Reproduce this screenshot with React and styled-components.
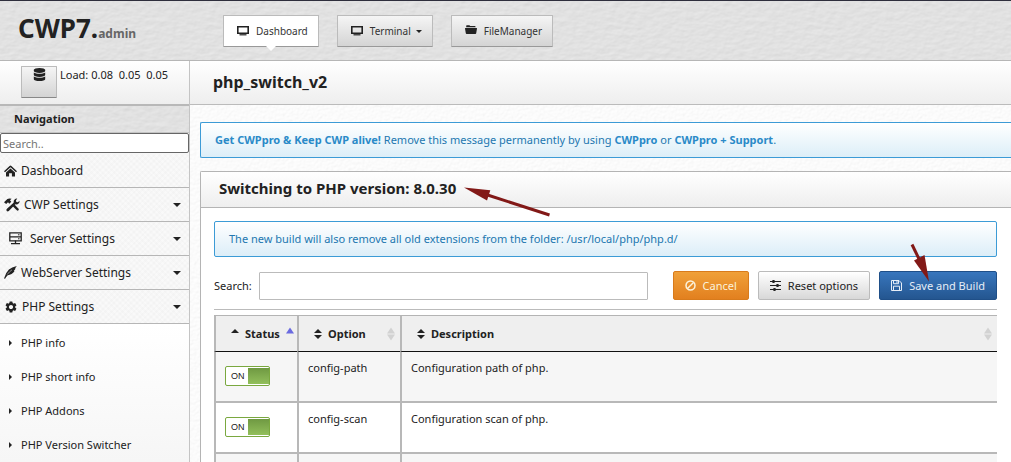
import React from 'react';
import styled, { createGlobalStyle } from 'styled-components';
import { FaDatabase } from 'react-icons/fa';
import { MdSettings } from 'react-icons/md';

// embossed paper grain, a higher elevation gives a lighter surface
const paper = (elevation, depth, frequency) =>
  `url("data:image/svg+xml,${encodeURIComponent(
    `<svg xmlns="http://www.w3.org/2000/svg" width="200" height="200"><filter id="f" x="0" y="0" width="100%" height="100%" color-interpolation-filters="sRGB"><feTurbulence type="fractalNoise" baseFrequency="${frequency}" numOctaves="3" stitchTiles="stitch" result="n"/><feDiffuseLighting in="n" lighting-color="#fff" surfaceScale="${depth}"><feDistantLight azimuth="240" elevation="${elevation}"/></feDiffuseLighting></filter><rect width="200" height="200" filter="url(#f)"/></svg>`
  )}")`;

const leather = paper(62, 0.16, '0.12 0.22');
const grain = paper(80, 0.25, '0.35');

const submenu = ['PHP info', 'PHP short info', 'PHP Addons', 'PHP Version Switcher'];

const options = [
  { name: 'config-path', description: 'Configuration path of php.' },
  { name: 'config-scan', description: 'Configuration scan of php.' },
];

function MonitorIcon() {
  return (
    <svg width="12" height="12" viewBox="0 0 12 12" aria-hidden="true">
      <path d="M0 1h12v8H0zM1.600 2.500v5h8.800v-5z" fill="currentColor" fillRule="evenodd" />
      <path d="M2.500 9.200h7v1.200h-7z" fill="currentColor" />
    </svg>
  );
}

function FolderIcon() {
  return (
    <svg width="12" height="12" viewBox="0 0 12 12" aria-hidden="true">
      <path d="M1.2 2.200V.9q0-.6.6-.6h2.600l.8.800h4.600q.8 0 .8.800v.3z" fill="currentColor" />
      <path d="M.5 3h11q.6 0 .5.600l-.8 4.700q-.1.700-.8.700H1.600q-.7 0-.8-.7L0 3.600Q-.1 3 .5 3z" fill="currentColor" />
    </svg>
  );
}

function HomeIcon() {
  return (
    <svg width="13" height="12" viewBox="0 0 13 12" aria-hidden="true">
      <path d="M0 6.200L5.600.900q.9-.8 1.800 0L13 6.200l-1 1L6.500 2.300 1 7.200z" fill="currentColor" />
      <path d="M2 7.500l4.500-4L11 7.500V11.500H7.900V8.300H5.100v3.200H2z" fill="currentColor" />
    </svg>
  );
}

function ToolsIcon() {
  return (
    <svg width="16" height="14" viewBox="0 0 16 14" aria-hidden="true">
      <path d="M0 4.300 3.400 1Q5 0 7.600.800L6 2.200l1.300 1.500-2 2L4 4.300 2.200 6z" fill="currentColor" />
      <path d="M8.500 8l2-1.500 4.300 4.500q.3 1.500-1.500 1.700z" fill="currentColor" />
      <path d="M2.700 11 9.600 4.800Q9.300 2 11.100 1q1.200-.7 2.200-.4L12 2.300l.3 1.600 1.600.3L15.500 2.700q.4 1.500-.9 2.900-1.300 1.200-3.200.7L4.800 13q-1.200.800-2 0-.9-1-.1-2z" fill="currentColor" />
    </svg>
  );
}

function ServerIcon() {
  return (
    <svg width="13" height="13" viewBox="0 0 13 13" fill="none" stroke="currentColor" aria-hidden="true">
      <path d="M.8.800h11.400v8H.8zM.8 4.800h11.400" strokeWidth="1.300" />
      <path d="M6.500 8.500v3M2 11.700h9" strokeWidth="1.300" />
      <path d="M9 2.800h1.500M9 6.800h1.500" />
    </svg>
  );
}

function FeatherIcon() {
  return (
    <svg width="13" height="13" viewBox="0 0 13 13" aria-hidden="true">
      <path d="M0 12.500Q1.500 7 4.900 3.600 7.700 1 12.800 0L11 2.600l.6.200L9.800 5l.7.200Q8 8.700 3.700 9.200q-1.800 1.500-2.600 3.600z" fill="currentColor" />
      <path d="M3.200 8.500Q5.500 5.500 8 3.800" stroke="#f7f7f7" strokeWidth=".5" fill="none" />
    </svg>
  );
}

function BanIcon() {
  return (
    <svg width="11" height="11" viewBox="0 0 11 11" fill="none" stroke="currentColor" strokeWidth="1.500" aria-hidden="true">
      <circle cx="5.500" cy="5.500" r="4.500" />
      <path d="M2.500 8.500l6-6" />
    </svg>
  );
}

function SlidersIcon() {
  return (
    <svg width="11" height="11" viewBox="0 0 11 11" stroke="currentColor" aria-hidden="true">
      <path d="M0 1.500h11M0 5.500h11M0 9.500h11" strokeWidth="1" />
      <path d="M3.500 0v3M7.500 4v3M4.500 8v3" strokeWidth="2.200" />
    </svg>
  );
}

function SaveIcon() {
  return (
    <svg width="11" height="11" viewBox="0 0 11 11" fill="none" stroke="currentColor" aria-hidden="true">
      <path d="M.5.500h7.500l2.500 2.500v7.500H.5z" />
      <path d="M2.500.500v3.200h5V.500M2.500 10.500V6.200h6v4.300M6 1v2" />
    </svg>
  );
}

function SortIcon({ asc }) {
  return (
    <svg width="8" height="10" viewBox="0 0 8 10" fill="currentColor" aria-hidden="true">
      <path d="M0 4l4-4 4 4z" />
      {!asc && <path d="M0 6l4 4 4-4z" />}
    </svg>
  );
}

function OrderIcon({ asc }) {
  return (
    <svg width="8" height="14" viewBox="0 0 8 14" fill="currentColor" aria-hidden="true">
      <path d="M0 6.500L4 .500l4 6z" />
      {!asc && <path d="M0 7.500l4 6 4-6z" />}
    </svg>
  );
}

function MenuItem({ icon, children, inset, open }) {
  return (
    <MenuLink href="#" $inset={inset}>
      {icon}
      <span>{children}</span>
      {open !== undefined && <Caret $menu />}
    </MenuLink>
  );
}

function App() {
  return (
    <Page>
      <GlobalStyle />
      <Header>
        <Brand href="#">
          CWP7.<small>admin</small>
        </Brand>
        <TopNav>
          <TopLink href="#" $active>
            <MonitorIcon />
            Dashboard
          </TopLink>
          <TopLink href="#">
            <MonitorIcon />
            <span>Terminal</span>
            <Caret />
          </TopLink>
          <TopLink href="#">
            <FolderIcon />
            FileManager
          </TopLink>
        </TopNav>
      </Header>
      <Body>
        <Sidebar>
          <Stats>
            <StatButton type="button" aria-label="Load">
              <FaDatabase size={13} />
            </StatButton>
            <span>Load: 0.08&nbsp; 0.05&nbsp; 0.05</span>
          </Stats>
          <NavTitle>Navigation</NavTitle>
          <MenuSearch type="text" placeholder="Search.." aria-label="Search menu" />
          <Menu>
            <MenuItem icon={<HomeIcon />}>Dashboard</MenuItem>
            <MenuItem icon={<ToolsIcon />} open={false}>CWP Settings</MenuItem>
            <MenuItem icon={<ServerIcon />} open={false} inset>Server Settings</MenuItem>
            <MenuItem icon={<FeatherIcon />} open={false}>WebServer Settings</MenuItem>
            <MenuItem icon={<MdSettings size={14} />} open>PHP Settings</MenuItem>
          </Menu>
          <SubMenu>
            {submenu.map((label) => (
              <li key={label}>
                <SubLink href="#">{label}</SubLink>
              </li>
            ))}
          </SubMenu>
        </Sidebar>
        <Main>
          <PageTitle>php_switch_v2</PageTitle>
          <Content>
            <Notice $edge>
              <b>Get CWPpro &amp; Keep CWP alive!</b> Remove this message permanently by using{' '}
              <a href="#">CWPpro</a> or <a href="#">CWPpro + Support</a>.
            </Notice>
            <Panel>
              <PanelTitle>Switching to PHP version: 8.0.30</PanelTitle>
              <PanelBody>
                <Notice>
                  The new build will also remove all old extensions from the folder: /usr/local/php/php.d/
                </Notice>
                <Toolbar>
                  <label htmlFor="search">Search:</label>
                  <SearchInput id="search" type="text" />
                  <Actions>
                    <ActionButton type="button" $kind="warning">
                      <BanIcon />
                      Cancel
                    </ActionButton>
                    <ActionButton type="button">
                      <SlidersIcon />
                      Reset options
                    </ActionButton>
                    <ActionButton type="button" $kind="primary">
                      <SaveIcon />
                      Save and Build
                    </ActionButton>
                  </Actions>
                </Toolbar>
                <Table>
                  <colgroup>
                    <col width="83" />
                    <col width="103" />
                    <col />
                  </colgroup>
                  <thead>
                    <tr>
                      <th>
                        <HeadCell $sorted>
                          <SortIcon asc />
                          <span>Status</span>
                          <OrderIcon asc />
                        </HeadCell>
                      </th>
                      <th>
                        <HeadCell>
                          <SortIcon />
                          <span>Option</span>
                          <OrderIcon />
                        </HeadCell>
                      </th>
                      <th>
                        <HeadCell>
                          <SortIcon />
                          <span>Description</span>
                          <OrderIcon />
                        </HeadCell>
                      </th>
                    </tr>
                  </thead>
                  <tbody>
                    {options.map((option) => (
                      <tr key={option.name}>
                        <td>
                          <Toggle>
                            <input type="checkbox" defaultChecked aria-label={option.name} />
                            ON
                            <i />
                          </Toggle>
                        </td>
                        <td>{option.name}</td>
                        <td>{option.description}</td>
                      </tr>
                    ))}
                    <tr>
                      <td />
                      <td />
                      <td />
                    </tr>
                  </tbody>
                </Table>
              </PanelBody>
            </Panel>
          </Content>
        </Main>
      </Body>
      <Pointer width="90" height="32" viewBox="0 0 90 32" $left={462} $top={185}>
        <path d="M24 9.500L87.500 30" stroke="#821917" strokeWidth="3" />
        <path d="M2 2.500L28.300 5.200 25 15.500z" fill="#821917" />
      </Pointer>
      <Pointer width="22" height="40" viewBox="0 0 22 40" $left={909} $top={243}>
        <path d="M3 1.500L11 18" stroke="#821917" strokeWidth="3" />
        <path d="M20 38.500L5 17.500 15.500 12z" fill="#821917" />
      </Pointer>
    </Page>
  );
}

export default App;

const GlobalStyle = createGlobalStyle`
  * {
    box-sizing: border-box;
  }

  body {
    margin: 0;
    color: #222222;
    background: #fafafa;
    font-family: 'Noto Sans', 'Open Sans', sans-serif;
    font-size: 11px;
    line-height: 18px;
  }

  a {
    color: inherit;
    text-decoration: none;
  }

  input, button {
    font: inherit;
    color: inherit;
  }

  svg {
    flex: none;
  }
`;

const Page = styled.div`
  position: relative;
  display: flex;
  flex-direction: column;
  height: 100vh;
  overflow: hidden;
`;

const Header = styled.header`
  flex: none;
  display: flex;
  height: 61px;
  border-top: 1px solid #2e2e3c;
  border-bottom: 1px solid #b6b6b6;
  background: #e0e0e0 ${leather};
`;

const Brand = styled.a`
  width: 223px;
  padding: 9px 0 0 18px;
  font-size: 26px;
  line-height: 36px;
  font-weight: 700;

  small {
    color: #666666;
    font-size: 12px;
  }
`;

const TopNav = styled.nav`
  display: flex;
  align-items: flex-start;
  gap: 18px;
  padding-top: 14px;
`;

const TopLink = styled.a`
  position: relative;
  display: flex;
  align-items: center;
  height: 32px;
  padding: 0 10px 0 13px;
  border: 1px solid #bbbbbb;
  border-bottom-color: #999999;
  border-radius: 1px;
  background: ${({ $active }) => ($active ? '#ffffff' : 'linear-gradient(#f5f5f5, #d4d4d4)')};
  color: #333333;
  font-size: 10px;

  svg {
    margin-right: 7px;
    color: #222222;
  }

  &::after {
    content: '';
    display: ${({ $active }) => ($active ? 'block' : 'none')};
    position: absolute;
    left: 50%;
    top: 30px;
    margin-left: -5px;
    border: 5px solid transparent;
    border-top-color: #ffffff;
    border-bottom: 0;
  }
`;

const Caret = styled.i`
  margin-left: ${({ $menu }) => ($menu ? 'auto' : '5px')};
  border: ${({ $menu }) => ($menu ? 4 : 3)}px solid transparent;
  border-top-color: #222222;
  border-bottom: 0;
`;

const Body = styled.div`
  flex: 1;
  display: flex;
  min-height: 0;
`;

const Sidebar = styled.aside`
  flex: none;
  display: flex;
  flex-direction: column;
  width: 190px;
  border-right: 1px solid #c4c4c4;
  background: #f7f7f7;
`;

const Stats = styled.div`
  display: flex;
  gap: 3px;
  height: 45px;
  padding: 5px 0 0 21px;
  border-bottom: 2px solid #b8b8b8;
  background: linear-gradient(#ffffff, #eeeeee);
`;

const StatButton = styled.button`
  display: flex;
  justify-content: center;
  width: 36px;
  height: 32px;
  padding: 1px 0 0;
  border: 1px solid #bbbbbb;
  border-bottom-color: #888888;
  border-radius: 1px;
  background: linear-gradient(#f5f5f5, #d4d4d4);
`;

const NavTitle = styled.h2`
  margin: 0;
  padding: 4px 14px;
  border-bottom: 1px solid #c4c4c4;
  background: #dedede ${leather};
  font-size: 11px;
  line-height: 18px;
`;

const MenuSearch = styled.input`
  width: 100%;
  height: 20px;
  padding: 0 2px;
  border: 1px solid #666666;
  border-radius: 2px;
  background: #ffffff;

  &::placeholder {
    color: #757575;
  }
`;

const Menu = styled.nav`
  padding-top: 1px;
`;

const MenuLink = styled.a`
  display: flex;
  align-items: center;
  gap: ${({ $inset }) => ($inset ? 8 : 4)}px;
  height: 34px;
  padding: 0 8px 0 ${({ $inset }) => ($inset ? 9 : 4)}px;
  border-bottom: 1px solid #b6b6b6;
  background:
    repeating-linear-gradient(45deg, transparent 0 2px, rgba(0, 0, 0, 0.012) 2px 4px),
    repeating-linear-gradient(-45deg, transparent 0 2px, rgba(0, 0, 0, 0.012) 2px 4px),
    #f9f9f9;
  font-size: 12px;
`;

const SubMenu = styled.ul`
  flex: 1;
  margin: 0;
  padding: 2px 0 0;
  list-style: none;
  background: linear-gradient(#ffffff, #f6f6f6);
`;

const SubLink = styled.a`
  display: flex;
  align-items: center;
  gap: 9px;
  height: 34px;
  padding-left: 9px;

  &::before {
    content: '';
    border: 3px solid transparent;
    border-left-color: #222222;
    border-right: 0;
  }
`;

const Main = styled.main`
  flex: 1;
  min-width: 0;
  background: #fafafa ${grain};
`;

const PageTitle = styled.h1`
  margin: 0;
  padding: 10px 23px;
  border-bottom: 1px solid #bbbbbb;
  background: linear-gradient(#ffffff, #eeeeee);
  font-size: 16px;
  line-height: 23px;
`;

const Content = styled.div`
  padding: 17px 0 0 10px;
`;

const Notice = styled.div`
  padding: 8px 14px;
  border: 1px solid #3c9bd6;
  border-right-width: ${({ $edge }) => ($edge ? 0 : 1)}px;
  border-radius: ${({ $edge }) => ($edge ? '2px 0 0 2px' : '2px')};
  background: linear-gradient(#ffffff, #dceef8);
  color: #2277b0;

  b, a {
    color: #2a8ac8;
    font-weight: 700;
  }
`;

const Panel = styled.section`
  margin-top: 13px;
  border: solid #b4b4b4;
  border-width: 1px 0 0 1px;
  border-radius: 2px 0 0 0;
  background: #ffffff;
`;

const PanelTitle = styled.h2`
  margin: 0;
  padding: 5px 18px 7px;
  border-bottom: 1px solid #b4b4b4;
  background: linear-gradient(#ffffff, #eeeeee);
  font-size: 15px;
  line-height: 23px;
`;

const PanelBody = styled.div`
  padding: 13px 14px 0 13px;
`;

const Toolbar = styled.div`
  display: flex;
  align-items: center;
  gap: 7px;
  margin: 14px 0 5px;
  padding-bottom: 9px;
  border-bottom: 1px solid #bbbbbb;
`;

const SearchInput = styled.input`
  flex: 1;
  min-width: 0;
  height: 28px;
  padding: 0 8px;
  border: 1px solid #bbbbbb;
  border-radius: 1px;
  background: #ffffff;
`;

const Actions = styled.div`
  display: flex;
  gap: 9px;
  margin-left: 18px;
`;

const kinds = {
  warning: { border: '#d87b1c', from: '#f0a039', to: '#e2801f', text: '#fbf3dc' },
  primary: { border: '#1f4f88', from: '#3876bd', to: '#245690', text: '#e6eef7' },
  plain: { border: '#bbbbbb', from: '#ffffff', to: '#d8d8d8', text: '#222222' },
};

const ActionButton = styled.button`
  display: flex;
  align-items: center;
  gap: 7px;
  height: 29px;
  padding: 0 11px;
  border: 1px solid ${({ $kind = 'plain' }) => kinds[$kind].border};
  border-radius: 2px;
  background: linear-gradient(
    ${({ $kind = 'plain' }) => kinds[$kind].from},
    ${({ $kind = 'plain' }) => kinds[$kind].to}
  );
  color: ${({ $kind = 'plain' }) => kinds[$kind].text};
  white-space: nowrap;
`;

const Table = styled.table`
  width: 100%;
  table-layout: fixed;
  border-collapse: separate;
  border-spacing: 0;
  border-top: 1px solid #b4b4b4;

  th, td {
    padding: 0 9px;
    border-left: 2px solid #b8b8b8;
    text-align: left;
    vertical-align: top;
  }

  th {
    height: 36px;
    border-bottom: 1px solid #111111;
    background: #efefef;
    vertical-align: middle;
  }

  td {
    height: 51px;
    padding-top: 7px;
    border-bottom: 2px solid #b8b8b8;
  }

  tbody tr {
    background: #ffffff;
  }

  tbody tr:nth-child(odd) {
    background: #f6f6f6;
  }
`;

const HeadCell = styled.div`
  display: flex;
  align-items: center;
  gap: 6px;
  padding-left: 6px;

  svg:last-child {
    margin-left: auto;
    margin-right: -4px;
    color: ${({ $sorted }) => ($sorted ? '#6a6ae0' : '#d2d2d2')};
  }
`;

const Toggle = styled.label`
  display: flex;
  align-items: center;
  justify-content: space-between;
  width: 45px;
  height: 20px;
  margin-top: 7px;
  padding: 1px 0 1px 5px;
  border: 1px solid #7aa83f;
  border-radius: 2px;
  background: #ffffff;
  font-family: 'Liberation Sans', sans-serif;
  font-size: 9px;

  input {
    position: absolute;
    margin: 0;
    opacity: 0;
  }

  i {
    width: 21px;
    height: 16px;
    background: linear-gradient(#6f9942, #92bf5b);
  }
`;

const Pointer = styled.svg`
  position: absolute;
  left: ${({ $left }) => $left}px;
  top: ${({ $top }) => $top}px;
  pointer-events: none;
`;
